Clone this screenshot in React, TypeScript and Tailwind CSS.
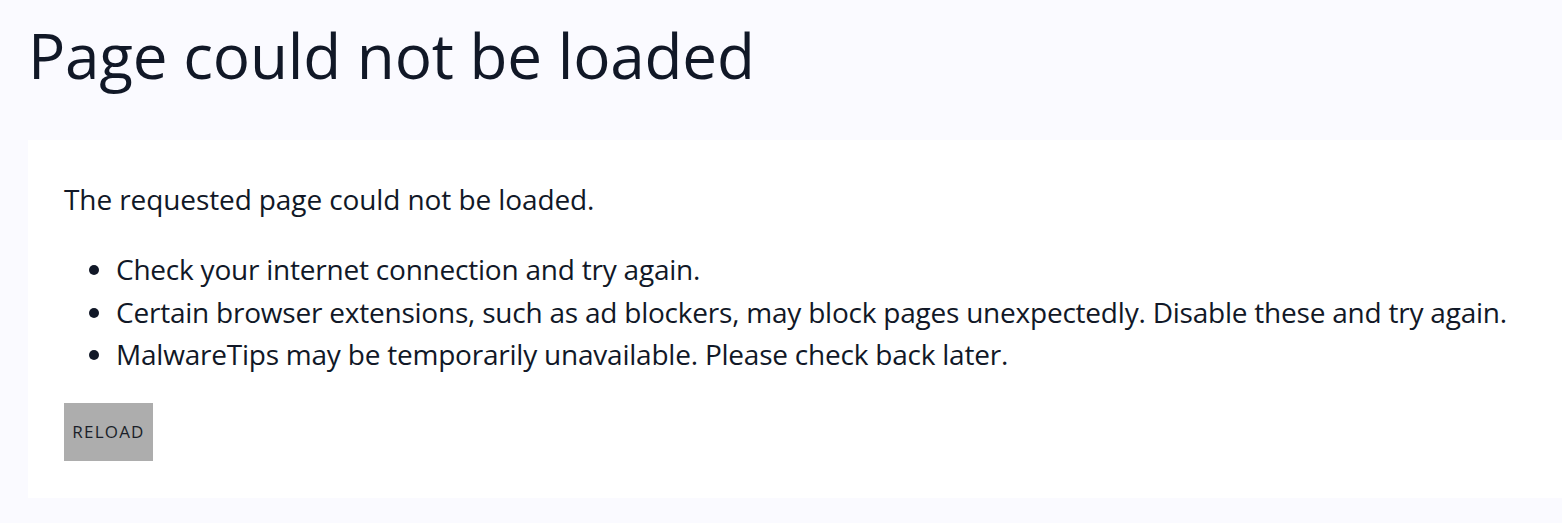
import React from "react";

export default function App() {
  return (
    <div
      className="min-h-[523px] bg-[#fafaff] text-[#111827] overflow-hidden"
      style={{ fontFamily: '"Open Sans", "Noto Sans", sans-serif' }}
    >
      <h1 className="pl-[28px] pt-[17px] text-[62px] leading-[76px] font-normal tracking-[-0.2px] whitespace-nowrap">
        Page could not be loaded
      </h1>
      <div className="mt-[47px] ml-[28px] bg-white pl-[36px] pt-[39px] pb-[37px]">
        <p className="text-[28px] leading-[40px] tracking-[-0.1px] whitespace-nowrap">
          The requested page could not be loaded.
        </p>
        <ul className="mt-[29px] list-disc pl-[52px] text-[28px] leading-[42.5px] tracking-[-0.22px] whitespace-nowrap">
          <li>Check your internet connection and try again.</li>
          <li>
            Certain browser extensions, such as ad blockers, may block pages
            unexpectedly. Disable these and try again.
          </li>
          <li>MalwareTips may be temporarily unavailable. Please check back later.</li>
        </ul>
        <button className="mt-[27px] flex h-[58px] w-[89px] items-center justify-center bg-[#adadad] text-[17px] tracking-[1.2px] text-[#1a1f29]">
          RELOAD
        </button>
      </div>
    </div>
  );
}
